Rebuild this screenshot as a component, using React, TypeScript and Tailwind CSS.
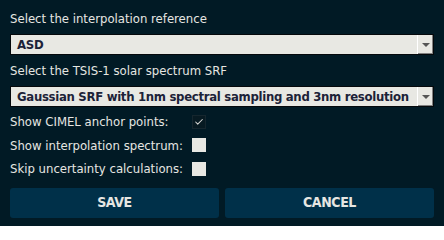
import { Check } from 'lucide-react'

function SelectBox({ value }: { value: string }) {
  return (
    <div className="flex h-[21px] w-[424px] items-stretch border border-[#05090c] bg-[#e8e8e3]">
      <div className="flex flex-1 items-center pl-[6px] text-[13px] font-bold tracking-[-0.3px] text-[#1c2238] whitespace-nowrap overflow-hidden">
        {value}
      </div>
      <div className="flex w-[16px] items-center justify-center border-l border-[#ffffff] bg-[#e8e8e3] shadow-[inset_-1px_-1px_0_#808080]">
        <svg width="8" height="4" viewBox="0 0 8 4">
          <path d="M0 0 L8 0 L4 4 Z" fill="#555555" />
        </svg>
      </div>
    </div>
  )
}

function CheckRow({ label, checked }: { label: string; checked?: boolean }) {
  return (
    <div className="flex h-[23.5px] items-center">
      <span className="w-[182px] text-[13px] text-[#e6e6e2] whitespace-nowrap">{label}</span>
      {checked ? (
        <span className="flex h-[14px] w-[14px] items-center justify-center border border-[#15262e] bg-[#071a22]">
          <Check className="h-[10px] w-[10px] text-[#d8d8d4]" strokeWidth={2.5} />
        </span>
      ) : (
        <span className="h-[14px] w-[14px] bg-[#e8e8e3]" />
      )}
    </div>
  )
}

export default function App() {
  return (
    <div
      className="flex h-[226px] w-[444px] flex-col bg-[#011a25] px-[10px] pt-[10px]"
      style={{ fontFamily: '"DejaVu Sans Condensed", "DejaVu Sans", sans-serif' }}
    >
      <div className="h-[18px] leading-[18px] text-[13px] text-[#e6e6e2]">Select the interpolation reference</div>
      <div className="mt-[6px]">
        <SelectBox value="ASD" />
      </div>
      <div className="mt-[7px] h-[18px] leading-[18px] text-[13px] text-[#e6e6e2]">Select the TSIS-1 solar spectrum SRF</div>
      <div className="mt-[6px]">
        <SelectBox value="Gaussian SRF with 1nm spectral sampling and 3nm resolution" />
      </div>
      <div className="mt-[3px] flex flex-col">
        <CheckRow label="Show CIMEL anchor points:" checked />
        <CheckRow label="Show interpolation spectrum:" />
        <CheckRow label="Skip uncertainty calculations:" />
      </div>
      <div className="mt-[7px] flex gap-[6px]">
        <button className="h-[30px] w-[209px] rounded-[3px] bg-[#003049] text-[14px] font-bold tracking-[-0.4px] text-[#e6e6e2]">SAVE</button>
        <button className="h-[30px] w-[209px] rounded-[3px] bg-[#003049] text-[14px] font-bold tracking-[-0.4px] text-[#e6e6e2]">CANCEL</button>
      </div>
    </div>
  )
}
